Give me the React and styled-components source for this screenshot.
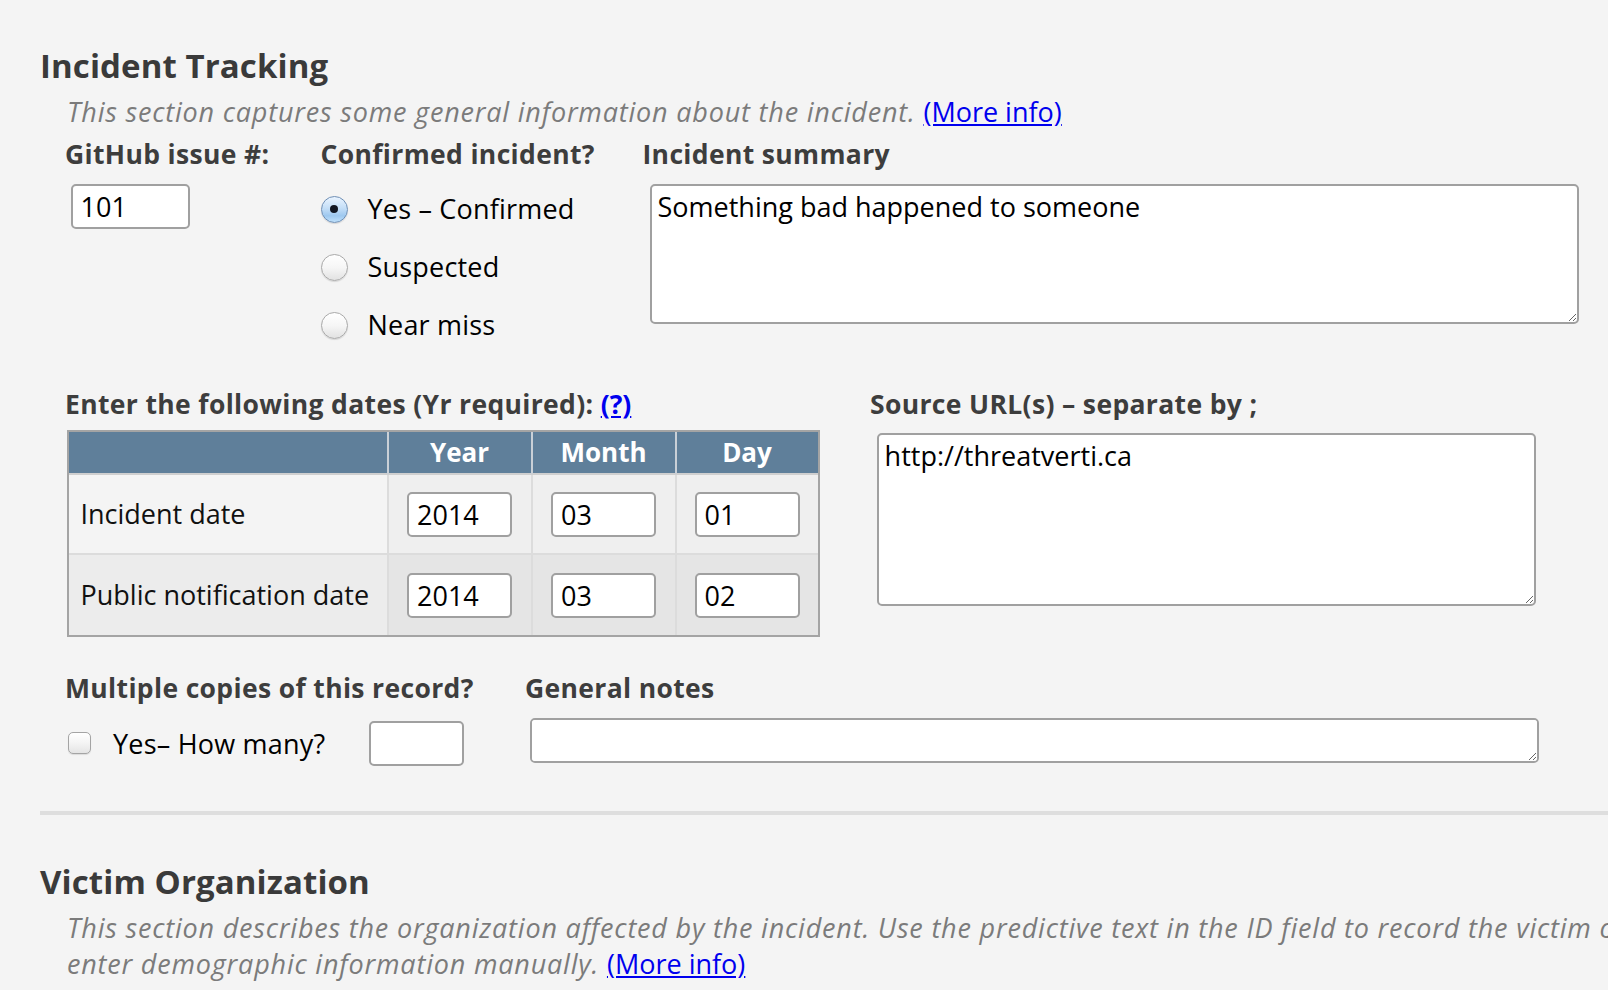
import React from 'react';
import styled, { createGlobalStyle } from 'styled-components';

const Global = createGlobalStyle`
  html, body { margin: 0; padding: 0; background: #f4f4f4; overflow: hidden; }
  body { font-family: "Open Sans", "Liberation Sans", sans-serif; color: #000; }
  * { box-sizing: border-box; }
`;

const Page = styled.div`
  padding-left: 40px;
  width: 1608px;
`;

const Section = styled.section`
  display: block;
`;

const Title = styled.h2`
  margin: ${p => p.$mt}px 0 0;
  font-size: 33px;
  line-height: 40px;
  font-weight: 700;
  letter-spacing: 0.1px;
  color: #3a3a3a;
`;

const Intro = styled.p`
  margin: 8px 0 0 27px;
  font-size: 27px;
  line-height: 36px;
  font-style: italic;
  letter-spacing: 0.8px;
  color: #7b7b7b;
  white-space: nowrap;
`;

const InfoLink = styled.a`
  font-style: normal;
  letter-spacing: 0;
  color: #0000ee;
  text-decoration: underline;
  cursor: pointer;
`;

const FieldRow = styled.div`
  display: flex;
  align-items: flex-start;
  margin-top: ${p => p.$mt}px;
  padding-left: 25px;
`;

const Field = styled.div`
  flex: ${p => (p.$w ? `0 0 ${p.$w}px` : '1 1 auto')};
  display: flex;
  flex-direction: column;
  align-items: flex-start;
`;

const Label = styled.div`
  font-size: 26.5px;
  line-height: 32px;
  font-weight: 700;
  letter-spacing: 0.35px;
  color: #3d3d3d;
  white-space: nowrap;
`;

const TextInput = styled.input`
  width: ${p => p.$w}px;
  height: 45px;
  margin: ${p => p.$mt || 0}px 0 0 ${p => p.$ml || 0}px;
  border: 2px solid #a0a0a0;
  border-radius: 5px;
  background: #fff;
  font-family: "Open Sans", sans-serif;
  font-size: 27px;
  color: #000;
  padding: 0 8px;
  outline: none;
`;

const TextArea = styled.textarea`
  display: block;
  width: ${p => p.$w}px;
  height: ${p => p.$h}px;
  margin: ${p => p.$mt}px 0 0 ${p => p.$ml}px;
  border: 2px solid #a0a0a0;
  border-radius: 5px;
  background: #fff;
  font-family: "Open Sans", sans-serif;
  font-size: 27px;
  line-height: 34px;
  color: #000;
  padding: 4px 6px;
  resize: both;
  outline: none;
`;

const RadioList = styled.div`
  display: flex;
  flex-direction: column;
  margin-top: 10px;
`;

const RadioRow = styled.label`
  display: flex;
  align-items: center;
  gap: 20px;
  height: 58px;
  font-size: 27px;
  line-height: 36px;
  letter-spacing: 0.2px;
  color: #000;
`;

const RadioMark = styled.span`
  width: 27px;
  height: 27px;
  border-radius: 50%;
  display: flex;
  align-items: center;
  justify-content: center;
  border: 1.5px solid ${p => (p.$on ? '#6f8fb5' : '#a9a9a9')};
  background: ${p =>
    p.$on
      ? 'linear-gradient(180deg, #eaf4ff 0%, #c4def7 45%, #9ec8ef 75%, #bfe0fb 100%)'
      : 'linear-gradient(180deg, #ffffff 0%, #f6f6f6 50%, #e2e2e2 100%)'};
  box-shadow: 0 1px 1px rgba(0, 0, 0, 0.12);

  &::after {
    content: '';
    width: 8px;
    height: 8px;
    border-radius: 50%;
    background: ${p => (p.$on ? '#121722' : 'transparent')};
  }
`;

const DateTable = styled.table`
  margin: 10px 0 0 1.5px;
  width: 753px;
  table-layout: fixed;
  border-collapse: separate;
  border-spacing: 0;
  border: 2px solid #a4a4a4;
`;

const HeadRow = styled.tr`
  height: 43px;
`;

const HeadCell = styled.th`
  padding: 0;
  background: #5f7f9a;
  color: #fff;
  font-size: 26px;
  font-weight: 700;
  text-align: center;
  border-bottom: 2px solid #cfcfcf;
  border-left: ${p => (p.$first ? 'none' : '2px solid #c9d0d7')};
`;

const BodyRow = styled.tr`
  height: 80px;
`;

const NameCell = styled.td`
  padding: 0 0 0 12px;
  font-size: 27px;
  color: #111;
  white-space: nowrap;
  background: ${p => (p.$alt ? '#ececec' : '#f4f4f4')};
  border-bottom: ${p => (p.$last ? 'none' : '2px solid #dcdcdc')};
`;

const ValueCell = styled.td`
  padding: 2px 0 0;
  text-align: center;
  background: ${p => (p.$alt ? '#e5e5e5' : '#efefef')};
  border-left: 2px solid #dcdcdc;
  border-bottom: ${p => (p.$last ? 'none' : '2px solid #dcdcdc')};
`;

const CellInput = styled(TextInput)`
  vertical-align: middle;
`;

const CheckRow = styled.div`
  display: flex;
  align-items: center;
  margin-top: 17px;
  font-size: 27px;
  color: #000;
`;

const CheckBox = styled.span`
  width: 23px;
  height: 22px;
  margin: 0 22px 0 3px;
  border-radius: 5px;
  border: 1.5px solid #a4a4a4;
  background: linear-gradient(180deg, #ffffff 0%, #f4f4f4 50%, #e4e4e4 100%);
  box-shadow: 0 1px 1px rgba(0, 0, 0, 0.1);
`;

const CheckText = styled.span`
  margin-right: 44px;
  white-space: nowrap;
  letter-spacing: 0.2px;
`;

const Divider = styled.hr`
  margin: 45px 0 0;
  height: 4px;
  border: none;
  background: #dedede;
  width: 100%;
`;

const dates = [
  { name: 'Incident date', y: '2014', m: '03', d: '01' },
  { name: 'Public notification date', y: '2014', m: '03', d: '02' },
];

const confirmOptions = [
  { label: 'Yes – Confirmed', on: true },
  { label: 'Suspected', on: false },
  { label: 'Near miss', on: false },
];

export default function App() {
  return (
    <Page>
      <Global />
      <Section>
        <Title $mt={46}>Incident Tracking</Title>
        <Intro>
          This section captures some general information about the incident.{' '}
          <InfoLink>(More info)</InfoLink>
        </Intro>

        <FieldRow $mt={8}>
          <Field $w={255.5}>
            <Label>GitHub issue #:</Label>
            <TextInput $w={119} $mt={14.3} $ml={5.5} defaultValue="101" />
          </Field>
          <Field $w={322}>
            <Label>Confirmed incident?</Label>
            <RadioList>
              {confirmOptions.map(o => (
                <RadioRow key={o.label}>
                  <RadioMark $on={o.on} />
                  {o.label}
                </RadioRow>
              ))}
            </RadioList>
          </Field>
          <Field>
            <Label>Incident summary</Label>
            <TextArea
              $w={929}
              $h={140}
              $mt={14.3}
              $ml={7}
              defaultValue="Something bad happened to someone"
            />
          </Field>
        </FieldRow>

        <FieldRow $mt={33.7}>
          <Field $w={805}>
            <Label>
              Enter the following dates (Yr required): <InfoLink>(?)</InfoLink>
            </Label>
            <DateTable>
              <colgroup>
                <col style={{ width: 318 }} />
                <col style={{ width: 144 }} />
                <col style={{ width: 144 }} />
                <col style={{ width: 143 }} />
              </colgroup>
              <thead>
                <HeadRow>
                  <HeadCell $first />
                  <HeadCell>Year</HeadCell>
                  <HeadCell>Month</HeadCell>
                  <HeadCell>Day</HeadCell>
                </HeadRow>
              </thead>
              <tbody>
                {dates.map((r, i) => {
                  const alt = i % 2 === 1;
                  const last = i === dates.length - 1;
                  return (
                    <BodyRow key={r.name}>
                      <NameCell $alt={alt} $last={last}>{r.name}</NameCell>
                      <ValueCell $alt={alt} $last={last}>
                        <CellInput $w={105} defaultValue={r.y} />
                      </ValueCell>
                      <ValueCell $alt={alt} $last={last}>
                        <CellInput $w={105} defaultValue={r.m} />
                      </ValueCell>
                      <ValueCell $alt={alt} $last={last}>
                        <CellInput $w={105} defaultValue={r.d} />
                      </ValueCell>
                    </BodyRow>
                  );
                })}
              </tbody>
            </DateTable>
          </Field>
          <Field>
            <Label>Source URL(s) – separate by ;</Label>
            <TextArea
              $w={659}
              $h={173}
              $mt={13.6}
              $ml={6.6}
              defaultValue="http://threatverti.ca"
            />
          </Field>
        </FieldRow>

        <FieldRow $mt={35}>
          <Field $w={460}>
            <Label>Multiple copies of this record?</Label>
            <CheckRow>
              <CheckBox />
              <CheckText>Yes– How many?</CheckText>
              <TextInput $w={95} />
            </CheckRow>
          </Field>
          <Field>
            <Label>General notes</Label>
            <TextArea $w={1009} $h={45} $mt={14} $ml={5} />
          </Field>
        </FieldRow>

        <Divider />
      </Section>

      <Section>
        <Title $mt={47}>Victim Organization</Title>
        <Intro>
          This section describes the organization affected by the incident. Use the
          predictive text in the ID field to record the victim or
          <br />
          enter demographic information manually. <InfoLink>(More info)</InfoLink>
        </Intro>
      </Section>
    </Page>
  );
}
